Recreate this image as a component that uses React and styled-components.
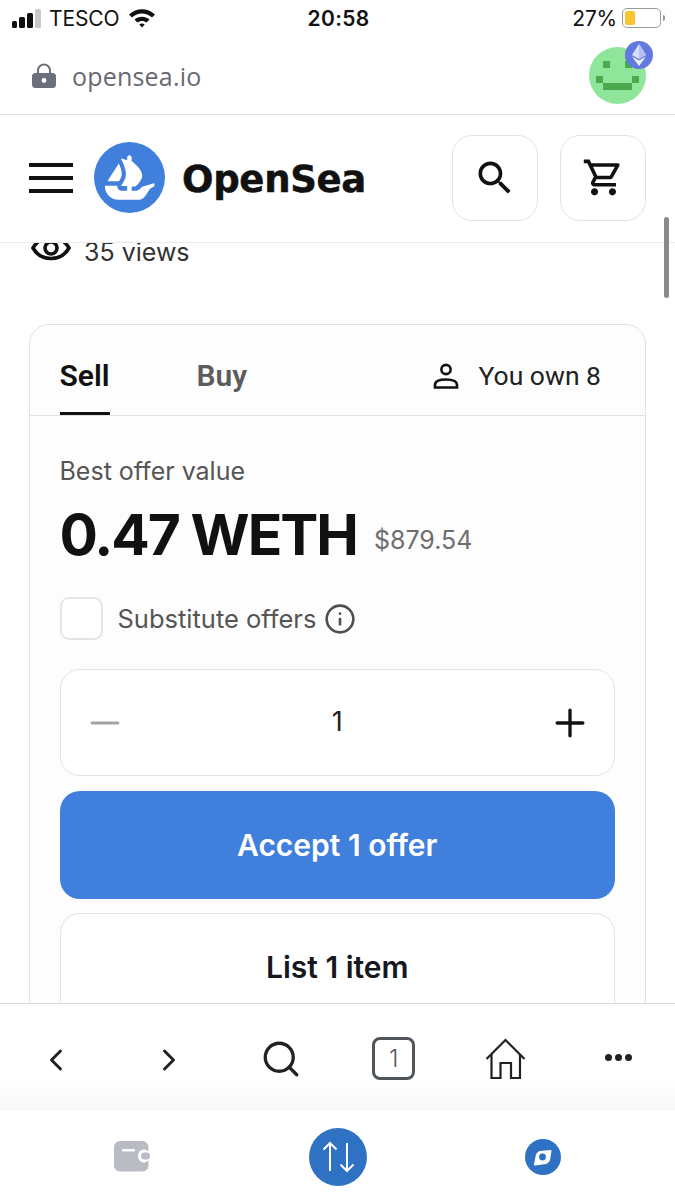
import React from "react";
import styled, { createGlobalStyle } from "styled-components";
import { ChevronLeft, ChevronRight, Search, Minus, Plus, Info } from "lucide-react";

const GlobalStyle = createGlobalStyle`
  html, body {
    margin: 0;
    padding: 0;
    background: #fff;
    overflow: hidden;
  }
  * {
    box-sizing: border-box;
  }
`;

export default function App() {
  return (
    <Root>
      <GlobalStyle />
      <StatusBar>
        <Carrier>
          <SignalBars />
          <span>TESCO</span>
          <WifiIcon />
        </Carrier>
        <Clock>20:58</Clock>
        <Power>
          <span>27%</span>
          <BatteryShell>
            <BatteryLevel />
          </BatteryShell>
          <BatteryTip />
        </Power>
      </StatusBar>

      <AddressBar>
        <LockIcon />
        <Url>opensea.io</Url>
        <Avatar>
          <SmileyFace />
          <ChainBadge>
            <EthIcon />
          </ChainBadge>
        </Avatar>
      </AddressBar>

      <SiteHeader>
        <Burger>
          <i />
          <i />
          <i />
        </Burger>
        <ShipLogo />
        <Wordmark>OpenSea</Wordmark>
        <HeaderActions>
          <SquareButton>
            <HeaderSearchIcon />
          </SquareButton>
          <SquareButton>
            <CartIcon />
          </SquareButton>
        </HeaderActions>
      </SiteHeader>

      <Content>
        <Scrollbar />
        <Views>
          <EyeIcon />
          <span>35 views</span>
        </Views>
        <TradeCard>
          <Tabs>
            <Tab $active>Sell</Tab>
            <Tab>Buy</Tab>
            <Owned>
              <PersonIcon />
              <span>You own 8</span>
            </Owned>
          </Tabs>
          <CardBody>
            <OfferLabel>Best offer value</OfferLabel>
            <PriceRow>
              <Price>0.47 WETH</Price>
              <Fiat>$879.54</Fiat>
            </PriceRow>
            <CheckRow>
              <CheckBox />
              <CheckLabel>Substitute offers</CheckLabel>
              <Info size={32} strokeWidth={2} color="#505050" />
            </CheckRow>
            <Stepper>
              <Minus size={44} strokeWidth={1.7} color="#a3a3a3" />
              <Quantity>1</Quantity>
              <Plus size={44} strokeWidth={1.8} color="#111" />
            </Stepper>
            <PrimaryButton>Accept 1 offer</PrimaryButton>
            <SecondaryButton>List 1 item</SecondaryButton>
          </CardBody>
        </TradeCard>
      </Content>

      <BrowserBar>
        <NudgedIcon>
          <ChevronLeft size={36} strokeWidth={2} color="#222" />
        </NudgedIcon>
        <NudgedIcon>
          <ChevronRight size={36} strokeWidth={2} color="#222" />
        </NudgedIcon>
        <Search size={42} strokeWidth={1.9} color="#222" />
        <TabCount>1</TabCount>
        <HomeIcon />
        <MoreDots>
          <i />
          <i />
          <i />
        </MoreDots>
      </BrowserBar>

      <WalletBar>
        <WalletIcon />
        <SwapButton>
          <SwapArrows />
        </SwapButton>
        <CompassIcon />
      </WalletBar>
    </Root>
  );
}

function SignalBars() {
  return (
    <svg width="29" height="22" viewBox="0 0 29 22">
      <rect x="0" y="14" width="5" height="7" rx="1.5" fill="#111" />
      <rect x="7" y="10" width="6" height="11" rx="1.5" fill="#111" />
      <rect x="15" y="6" width="6" height="15" rx="1.5" fill="#111" />
      <rect x="23" y="2" width="6" height="19" rx="1.5" fill="#c9c9c9" />
    </svg>
  );
}

function WifiIcon() {
  return (
    <svg width="28" height="22" viewBox="0 0 28 22">
      <path d="M1 7.5C8.5 0.5 19.5 0.5 27 7.5L24 10.6C18 5.2 10 5.2 4 10.6Z" fill="#111" />
      <path d="M6.5 12.6C11 8.8 17 8.8 21.5 12.6L18.6 15.6C15.8 13.4 12.2 13.4 9.4 15.6Z" fill="#111" />
      <path d="M11.3 17.4C13 16.2 15 16.2 16.7 17.4L14 20.4Z" fill="#111" />
    </svg>
  );
}

function LockIcon() {
  return (
    <svg width="26" height="26" viewBox="0 0 26 26">
      <path d="M7 11V7.5a6 6 0 0 1 12 0V11" fill="none" stroke="#6b6f7b" strokeWidth="2" />
      <rect x="1" y="10" width="24" height="15" rx="3.5" fill="#6b6f7b" />
      <circle cx="13" cy="17.5" r="2.4" fill="#fff" />
    </svg>
  );
}

function SmileyFace() {
  return (
    <svg width="57" height="57" viewBox="0 0 57 57">
      <g fill="#4ba94e">
        <rect x="14" y="14" width="7" height="7" />
        <rect x="36" y="14" width="7" height="7" />
        <rect x="7" y="29" width="7" height="7" />
        <rect x="43" y="29" width="7" height="7" />
        <rect x="14" y="36" width="29" height="7" />
      </g>
    </svg>
  );
}

function EthIcon() {
  return (
    <svg width="14" height="22" viewBox="0 0 14 22">
      <path d="M7 0L0 11l7 4 7-4Z" fill="#d9dffa" />
      <path d="M7 0v15l7-4Z" fill="#b6c0f2" />
      <path d="M0 12.6L7 22l7-9.4-7 4Z" fill="#eef0fd" />
    </svg>
  );
}

function ShipLogo() {
  return (
    <LogoSvg width="71" height="71" viewBox="0 0 90 90">
      <circle cx="45" cy="45" r="45" fill="#407fdb" />
      <g transform="translate(45 45) scale(1.13) translate(-46.5 -43)">
        <path
          fill="#fff"
          d="M22.2011 46.512L22.3953 46.2069L34.1016 27.8939C34.2726 27.6257 34.6749 27.6535 34.8043 27.9447C36.76 32.3277 38.4475 37.7786 37.6569 41.1721C37.3194 42.5683 36.3948 44.4593 35.3545 46.2069C35.2204 46.4612 35.0725 46.7109 34.9153 46.9513C34.8413 47.0622 34.7165 47.127 34.5824 47.127H22.5432C22.2196 47.127 22.0301 46.7756 22.2011 46.512Z"
        />
        <path
          fill="#fff"
          d="M74.38 49.9149V52.8137C74.38 52.9801 74.2783 53.1281 74.1304 53.1928C73.2242 53.5812 70.1219 55.0052 68.832 56.799C65.5402 61.3807 63.0251 67.932 57.4031 67.932H33.949C25.6362 67.932 18.9 61.1727 18.9 52.8322V52.564C18.9 52.3421 19.0803 52.1618 19.3023 52.1618H32.3771C32.6359 52.1618 32.8255 52.4022 32.8024 52.6565C32.7099 53.5072 32.8671 54.3764 33.2693 55.167C34.0461 56.7435 35.6549 57.7283 37.3934 57.7283H43.866V52.675H37.4673C37.1391 52.675 36.9449 52.2959 37.1345 52.0277C37.2038 51.9214 37.2824 51.8104 37.3656 51.6856C37.9713 50.8257 38.8358 49.4895 39.6958 47.9684C40.2829 46.9421 40.8516 45.8463 41.3093 44.746C41.4018 44.5472 41.4757 44.3438 41.5497 44.1449C41.6745 43.7936 41.804 43.4653 41.8964 43.1371C41.9889 42.8597 42.0629 42.5684 42.1369 42.2956C42.3542 41.3617 42.4467 40.3723 42.4467 39.3459C42.4467 38.9437 42.4282 38.523 42.3912 38.1207C42.3727 37.6815 42.3172 37.2423 42.2617 36.8031C42.2247 36.4147 42.1554 36.031 42.0814 35.6288C41.9889 35.0416 41.8595 34.4591 41.7115 33.8719L41.6607 33.65C41.5497 33.2478 41.4572 32.864 41.3278 32.4618C40.9625 31.1996 40.5418 29.9698 40.098 28.8186C39.9362 28.3609 39.7512 27.9217 39.5663 27.4825C39.2935 26.8213 39.0161 26.2203 38.7618 25.6516C38.6324 25.3927 38.5214 25.1569 38.4104 24.9165C38.2856 24.6437 38.1562 24.371 38.0267 24.1122C37.9343 23.9134 37.8279 23.7284 37.754 23.5435L36.9634 22.0825C36.8524 21.8836 37.0374 21.6478 37.2546 21.7079L42.2016 23.0488H42.2155C42.2247 23.0488 42.2293 23.0534 42.234 23.0534L42.8858 23.2337L43.6025 23.4371L43.866 23.5111V20.5706C43.866 19.1514 45.0034 18 46.4086 18C47.1112 18 47.7492 18.2866 48.2069 18.7536C48.6646 19.2206 48.9512 19.8586 48.9512 20.5706V24.935L49.4783 25.0829C49.52 25.0968 49.5616 25.1153 49.5986 25.143C49.7279 25.2401 49.9129 25.3835 50.1487 25.5591C50.3337 25.7071 50.5371 25.8919 50.7821 26.0815C51.2676 26.4745 51.8501 26.9785 52.4905 27.5611C52.6617 27.7091 52.828 27.8615 52.9806 28.0141C53.8082 28.7845 54.7359 29.6876 55.6204 30.6862C55.8681 30.9636 56.1114 31.2456 56.3591 31.5461C56.6067 31.8513 56.8683 32.1517 57.0944 32.4522C57.3915 32.8486 57.7124 33.2601 57.9895 33.6875C58.1207 33.8892 58.2694 34.0957 58.3959 34.2974C58.7527 34.8373 59.0671 35.3958 59.3668 35.9542C59.4933 36.2131 59.6227 36.4937 59.7337 36.7711C60.0665 37.5154 60.3301 38.2736 60.5011 39.0318C60.5519 39.1937 60.5889 39.3693 60.6074 39.5265V39.5635C60.6629 39.7855 60.6814 40.0212 60.6999 40.2617C60.7739 41.0383 60.7369 41.8149 60.5659 42.5961C60.4919 42.9289 60.3994 43.2433 60.2885 43.5761C60.1775 43.8951 60.0665 44.2279 59.9232 44.5423C59.6458 45.1896 59.3176 45.8369 58.9246 46.4425C58.7974 46.6664 58.6495 46.9045 58.5016 47.1265C58.3398 47.3623 58.1733 47.5843 58.0254 47.8016C57.8219 48.0789 57.6046 48.3702 57.3827 48.6291C57.1839 48.9018 56.9804 49.1745 56.7585 49.4149C56.449 49.7801 56.1532 50.1268 55.8435 50.4597C55.6586 50.677 55.4598 50.899 55.2563 51.0979C55.0575 51.3198 54.854 51.5187 54.6691 51.7037C54.3595 52.0133 54.1006 52.2536 53.8833 52.4525L53.3746 52.9195C53.3006 52.9843 53.2035 53.0212 53.1019 53.0212H48.9512V57.7283H54.1745C55.3443 57.7283 56.4554 57.3149 57.3518 56.5568C57.6583 56.2887 58.9963 55.1305 60.5774 53.3834C60.6304 53.3241 60.699 53.282 60.7784 53.2635L73.8664 49.4797C74.1105 49.4101 74.38 49.5915 74.38 49.9149Z"
        />
      </g>
    </LogoSvg>
  );
}

function HeaderSearchIcon() {
  return (
    <svg width="44" height="44" viewBox="0 0 24 24" fill="#111">
      <path d="M15.5 14h-.79l-.28-.27C15.41 12.59 16 11.11 16 9.5 16 5.91 13.09 3 9.5 3S3 5.91 3 9.5 5.91 16 9.5 16c1.61 0 3.09-.59 4.23-1.57l.27.28v.79l5 4.99L20.49 19l-4.99-5zm-6 0C7.01 14 5 11.99 5 9.5S7.01 5 9.5 5 14 7.01 14 9.5 11.99 14 9.5 14z" />
    </svg>
  );
}

function CartIcon() {
  return (
    <svg width="43" height="43" viewBox="0 0 24 24" fill="#111">
      <path d="M15.55 13c.75 0 1.41-.41 1.75-1.03l3.58-6.49A.996.996 0 0 0 20.01 4H5.21l-.94-2H1v2h2l3.6 7.59-1.35 2.44C4.52 15.37 5.48 17 7 17h12v-2H7l1.1-2h7.45zM6.16 6h12.15l-2.76 5H8.53L6.16 6zM7 18c-1.1 0-1.99.9-1.99 2S5.9 22 7 22s2-.9 2-2-.9-2-2-2zm10 0c-1.1 0-1.99.9-1.99 2s.89 2 1.99 2 2-.9 2-2-.9-2-2-2z" />
    </svg>
  );
}

function EyeIcon() {
  return (
    <EyeSvg width="40" height="32" viewBox="0 0 40 32" fill="none" stroke="#111" strokeWidth="3.6">
      <path d="M2 16C10 2 30 2 38 16C30 30 10 30 2 16Z" />
      <circle cx="20" cy="16" r="6" />
    </EyeSvg>
  );
}

function PersonIcon() {
  return (
    <svg width="26" height="26" viewBox="0 0 26 26" fill="none" stroke="#111" strokeWidth="2.6">
      <circle cx="13" cy="6.5" r="4.6" />
      <path d="M2 24.5V22C2 18 7 16.5 13 16.5S24 18 24 22V24.5Z" />
    </svg>
  );
}

function HomeIcon() {
  return (
    <svg width="42" height="42" viewBox="0 0 42 42" fill="none" stroke="#222" strokeWidth="2.2">
      <path d="M1.5 21L20.5 2L39.5 21" />
      <path d="M6.5 16V40H15.5V25H26V40H35V16" />
    </svg>
  );
}

function WalletIcon() {
  return (
    <svg width="36" height="31" viewBox="0 0 36 31">
      <rect x="0" y="0" width="34.5" height="30.5" rx="6" fill="#b9bcc2" />
      <rect x="8" y="8" width="13" height="2.4" rx="1.2" fill="#fff" />
      <rect x="24" y="8.5" width="12" height="13" rx="6" fill="#fff" />
      <rect x="27" y="11.5" width="9" height="7" rx="3.5" fill="#b9bcc2" />
    </svg>
  );
}

function SwapArrows() {
  return (
    <svg width="36" height="34" viewBox="0 0 36 34" fill="none" stroke="#fff" strokeWidth="2">
      <path d="M10 31V3M3.5 9.5L10 3L16.5 9.5" />
      <path d="M27 3V31M20.5 24.5L27 31L33.5 24.5" />
    </svg>
  );
}

function CompassIcon() {
  return (
    <svg width="36" height="36" viewBox="0 0 36 36">
      <circle cx="18" cy="18" r="18" fill="#2f72c4" />
      <path
        d="M25.5 12L24 21Q23.4 23 21 24L10 25.5L12 15.5Q13 14 15 13Z"
        fill="#fff"
        stroke="#fff"
        strokeWidth="2"
        strokeLinejoin="round"
      />
      <circle cx="17.5" cy="18" r="3.4" fill="#2f72c4" />
    </svg>
  );
}

const Root = styled.div`
  position: relative;
  width: 675px;
  height: 1200px;
  overflow: hidden;
  display: flex;
  flex-direction: column;
  background: #fff;
  color: #111;
  font-family: Inter, "Liberation Sans", sans-serif;
`;

const StatusBar = styled.div`
  height: 38px;
  flex: none;
  display: grid;
  grid-template-columns: 1fr auto 1fr;
  align-items: center;
  padding: 0 10px 2px 12px;
  font-size: 21px;
`;

const Carrier = styled.div`
  display: flex;
  align-items: center;
  gap: 8px;
  letter-spacing: -0.1px;
`;

const Clock = styled.div`
  font-weight: 600;
  letter-spacing: 0.3px;
`;

const Power = styled.div`
  display: flex;
  align-items: center;
  justify-content: flex-end;
  gap: 5px;
  letter-spacing: -0.2px;
`;

const BatteryShell = styled.div`
  width: 39px;
  height: 20px;
  border: 1.5px solid #9a9a9a;
  border-radius: 5px;
  padding: 2px;
`;

const BatteryLevel = styled.div`
  width: 30%;
  height: 100%;
  background: #f7c52f;
  border-radius: 2px;
`;

const BatteryTip = styled.div`
  width: 2px;
  height: 6px;
  margin-left: -3px;
  background: #9a9a9a;
  border-radius: 0 2px 2px 0;
`;

const AddressBar = styled.div`
  height: 77px;
  flex: none;
  display: flex;
  align-items: center;
  padding: 0 29px 1px 31px;
  border-bottom: 1.5px solid #dfdfe1;
`;

const Url = styled.div`
  margin-left: 15px;
  font-family: "Open Sans", sans-serif;
  font-size: 25px;
  color: #666a70;
  letter-spacing: 0.2px;
`;

const Avatar = styled.div`
  position: relative;
  width: 57px;
  height: 57px;
  margin: 0 0 0 auto;
  border-radius: 50%;
  background: #8fe69a;
`;

const ChainBadge = styled.div`
  position: absolute;
  top: -6px;
  right: -7px;
  width: 28px;
  height: 28px;
  border-radius: 50%;
  background: #6379e0;
  display: flex;
  align-items: center;
  justify-content: center;
`;

const SiteHeader = styled.header`
  height: 128px;
  flex: none;
  display: flex;
  align-items: center;
  padding: 0 29px 2px;
  border-bottom: 1.5px solid #e9e9e9;
`;

const Burger = styled.div`
  width: 44px;
  display: flex;
  flex-direction: column;
  gap: 9px;
  i {
    display: block;
    height: 4px;
    background: #111;
  }
`;

const LogoSvg = styled.svg`
  margin-left: 21px;
  flex: none;
`;

const Wordmark = styled.div`
  margin: 3px 0 0 17px;
  font-family: "DejaVu Sans", sans-serif;
  font-size: 37px;
  font-weight: 700;
  color: #111;
  letter-spacing: -0.3px;
  -webkit-text-stroke: 0.5px #111;
`;

const HeaderActions = styled.div`
  margin-left: auto;
  display: flex;
  gap: 22px;
`;

const SquareButton = styled.button`
  width: 86px;
  height: 86px;
  padding: 0;
  background: #fff;
  border: 1.5px solid #e3e3e3;
  border-radius: 20px;
  display: flex;
  align-items: center;
  justify-content: center;
`;

const Content = styled.main`
  flex: 1;
  min-height: 0;
  overflow: hidden;
  padding: 0 29px;
  display: flex;
  flex-direction: column;
`;

const Scrollbar = styled.div`
  position: absolute;
  top: 217px;
  left: 664px;
  width: 5px;
  height: 81px;
  border-radius: 3px;
  background: #8a8a8a;
`;

const Views = styled.div`
  height: 27px;
  margin-top: -5px;
  flex: none;
  display: flex;
  align-items: center;
  gap: 13px;
  padding-left: 2px;
  font-size: 25px;
  color: #333;
`;

const EyeSvg = styled.svg`
  margin-top: -7px;
  flex: none;
`;

const TradeCard = styled.section`
  margin-top: 59px;
  flex: none;
  border: 1.5px solid #e3e3e3;
  border-radius: 20px;
  background: #fdfdfd;
`;

const Tabs = styled.div`
  height: 91px;
  display: flex;
  align-items: stretch;
  gap: 87px;
  padding: 0 44px 0 29.5px;
  border-bottom: 1.5px solid #e3e3e3;
`;

const Tab = styled.div`
  display: flex;
  align-items: center;
  font-family: Roboto, sans-serif;
  font-size: 30px;
  font-weight: 600;
  color: ${(props) => (props.$active ? "#111" : "#5c5c5c")};
  box-shadow: ${(props) => (props.$active ? "inset 0 -3px 0 #111" : "none")};
  padding-top: 11px;
`;

const Owned = styled.div`
  margin-left: auto;
  display: flex;
  align-items: center;
  gap: 20px;
  padding-top: 11px;
  font-family: Roboto, sans-serif;
  font-size: 26.5px;
  color: #222;
`;

const CardBody = styled.div`
  display: flex;
  flex-direction: column;
  padding: 40px 30px 0 29.5px;
`;

const OfferLabel = styled.div`
  font-size: 25px;
  line-height: 30px;
  color: #555;
`;

const PriceRow = styled.div`
  margin-top: 16px;
  display: flex;
  align-items: center;
  gap: 17px;
`;

const Price = styled.div`
  font-size: 57px;
  line-height: 66px;
  font-weight: 700;
  letter-spacing: -2px;
  color: #111;
`;

const Fiat = styled.div`
  margin-top: 10px;
  font-size: 25px;
  color: #6e6e6e;
`;

const CheckRow = styled.div`
  margin-top: 29px;
  display: flex;
  align-items: center;
`;

const CheckBox = styled.div`
  width: 43px;
  height: 43px;
  border: 2px solid #e5e5e5;
  border-radius: 9px;
  background: #fff;
`;

const CheckLabel = styled.div`
  margin: 0 8px 0 15px;
  font-size: 25.5px;
  color: #555;
`;

const Stepper = styled.div`
  margin-top: 29px;
  height: 107px;
  display: flex;
  align-items: center;
  justify-content: space-between;
  padding: 0 22px;
  background: #fff;
  border: 1.5px solid #e3e3e3;
  border-radius: 20px;
`;

const Quantity = styled.div`
  margin-top: -3px;
  font-size: 27px;
  color: #222;
`;

const PrimaryButton = styled.button`
  margin-top: 15px;
  height: 108px;
  border: none;
  border-radius: 20px;
  background: #407fdb;
  color: #fff;
  font-family: inherit;
  font-size: 30px;
  font-weight: 600;
`;

const SecondaryButton = styled.button`
  margin-top: 14px;
  height: 150px;
  padding: 0 0 42px;
  border: 1.5px solid #e3e3e3;
  border-radius: 20px;
  background: #fff;
  color: #14181f;
  font-family: inherit;
  font-size: 30px;
  font-weight: 600;
`;

const BrowserBar = styled.nav`
  height: 108px;
  flex: none;
  display: grid;
  grid-template-columns: repeat(6, 1fr);
  justify-items: center;
  align-items: center;
  padding-top: 2px;
  background: linear-gradient(#fff 70%, #f8f8f8);
  border-top: 1.5px solid #d9d9d9;
`;

const NudgedIcon = styled.div`
  display: flex;
  margin-top: 3px;
`;

const TabCount = styled.div`
  width: 43px;
  height: 43px;
  border: 3px solid #50555c;
  border-radius: 8px;
  display: flex;
  align-items: center;
  justify-content: center;
  font-size: 24px;
  font-weight: 300;
  color: #50555c;
`;

const MoreDots = styled.div`
  display: flex;
  gap: 3px;
  margin-top: -3px;
  i {
    display: block;
    width: 7px;
    height: 7px;
    border-radius: 50%;
    background: #222;
  }
`;

const WalletBar = styled.div`
  height: 89px;
  flex: none;
  display: flex;
  align-items: center;
  padding: 2px 114px 0;
  justify-content: space-between;
  background: #fff;
`;

const SwapButton = styled.div`
  width: 58px;
  height: 58px;
  border-radius: 50%;
  background: #2f72c4;
  display: flex;
  align-items: center;
  justify-content: center;
`;
